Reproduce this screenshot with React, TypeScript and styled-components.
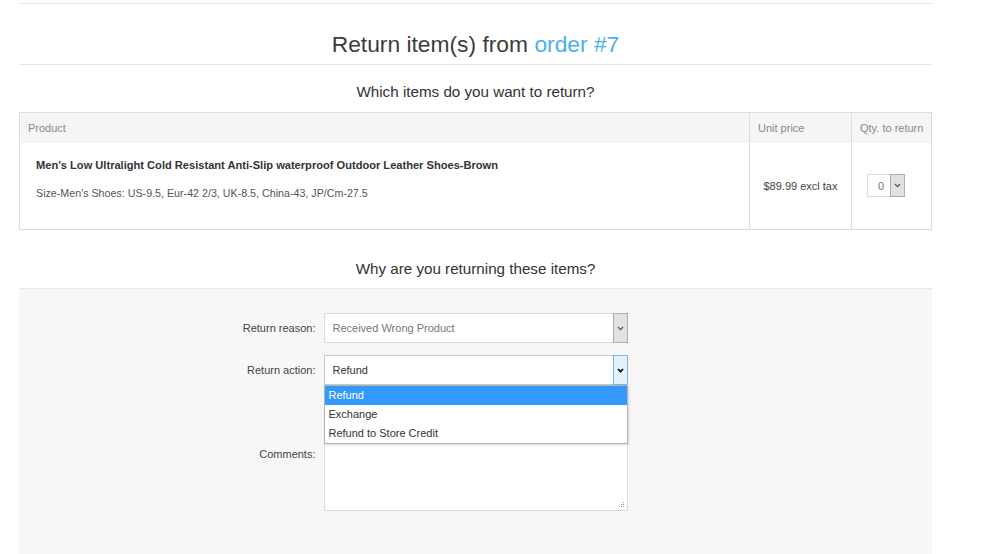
import React from 'react';
import styled, { createGlobalStyle } from 'styled-components';

const GlobalStyle = createGlobalStyle`
  body {
    margin: 0;
    background: #fff;
    font-family: 'Liberation Sans', Arial, sans-serif;
    color: #444;
  }
`;

const Page = styled.div`
  width: 913px;
  margin-left: 19px;
  padding-top: 3px;
`;

const Title = styled.h1`
  margin: 0;
  padding: 27px 0 7px;
  border-top: 1px solid #e5e5e5;
  border-bottom: 1px solid #e5e5e5;
  font-size: 22.8px;
  line-height: 26px;
  font-weight: normal;
  color: #3c3c3c;
  text-align: center;

  a {
    color: #4ab0ee;
    text-decoration: none;
  }
`;

const SubTitle = styled.h2<{ $top: number; $bottom: number }>`
  margin: ${(p) => p.$top}px 0 ${(p) => p.$bottom}px;
  font-size: 15.2px;
  line-height: 20px;
  font-weight: normal;
  color: #333;
  text-align: center;
`;

const Table = styled.table`
  width: 100%;
  border-collapse: collapse;
  border: 1px solid #ddd;
  font-size: 11px;
  table-layout: fixed;
`;

const Th = styled.th<{ $width?: number }>`
  height: 30px;
  padding: 0 8px;
  background: #f5f5f5;
  color: #888;
  font-weight: normal;
  white-space: nowrap;
  text-align: left;
  border-left: 1px solid #ddd;
  width: ${(p) => (p.$width ? `${p.$width}px` : 'auto')};
  box-sizing: border-box;
`;

const Td = styled.td<{ $align?: 'left' | 'center'; $top?: boolean; $pad: number }>`
  height: 87px;
  box-sizing: border-box;
  padding: ${(p) => (p.$top ? '16px' : '0')} 0 0 ${(p) => p.$pad}px;
  border-left: 1px solid #ddd;
  text-align: ${(p) => p.$align ?? 'left'};
  white-space: nowrap;
  color: #444;
  vertical-align: ${(p) => (p.$top ? 'top' : 'middle')};
`;

const ProductName = styled.div`
  font-weight: bold;
  font-size: 11.1px;
  color: #333;
  line-height: 13px;
  margin-bottom: 15px;
`;

const Attributes = styled.div`
  color: #555;
  font-size: 10.7px;
  line-height: 13px;
`;

const SelectBox = styled.div<{ $focused?: boolean; $width: number; $height: number; $muted?: boolean }>`
  position: relative;
  display: inline-flex;
  align-items: stretch;
  box-sizing: border-box;
  width: ${(p) => p.$width}px;
  height: ${(p) => p.$height}px;
  background: #fff;
  border: 1px solid ${(p) => (p.$focused ? '#c8c8c8' : '#ddd')};
  font-size: 11px;
  color: ${(p) => (p.$muted ? '#777' : '#333')};
  text-align: left;
  vertical-align: middle;
`;

const SelectValue = styled.span<{ $pad: number }>`
  flex: 1;
  display: flex;
  align-items: center;
  padding-left: ${(p) => p.$pad}px;
`;

const ArrowButton = styled.span<{ $focused?: boolean }>`
  display: flex;
  align-items: center;
  justify-content: center;
  width: 13px;
  margin: -1px -1px -1px 0;
  background: ${(p) => (p.$focused ? '#e5f1fb' : '#e1e1e1')};
  border: 1px solid ${(p) => (p.$focused ? '#7eb4ea' : '#adadad')};
  color: ${(p) => (p.$focused ? '#111' : '#555')};
`;

const Chevron = ({ dark }: { dark?: boolean }) => (
  <svg width="7" height="5" viewBox="0 0 7 5">
    <path d="M1 1 L3.5 3.6 L6 1" fill="none" stroke="currentColor" strokeWidth={dark ? 1.8 : 1.3} />
  </svg>
);

const Panel = styled.div`
  background: #f7f7f7;
  border-top: 1px solid #e8e8e8;
  padding: 24px 0 50px;
  display: grid;
  grid-template-columns: 1fr 304px 1fr;
  row-gap: 12px;
  align-items: center;
`;

const Label = styled.label`
  grid-column: 1;
  justify-self: end;
  padding-right: 8px;
  font-size: 11px;
  color: #444;
`;

const Field = styled.div`
  grid-column: 2;
  position: relative;
`;

const Menu = styled.ul`
  position: absolute;
  top: 100%;
  left: 0;
  width: 304px;
  box-sizing: border-box;
  margin: 0;
  padding: 0;
  list-style: none;
  background: #fff;
  border: 1px solid #b4b4b4;
  box-shadow: 1px 1px 2px rgba(0, 0, 0, 0.15);
  z-index: 2;
`;

const MenuItem = styled.li<{ $active?: boolean }>`
  height: 19px;
  line-height: 19px;
  padding-left: 4px;
  font-size: 11px;
  background: ${(p) => (p.$active ? '#3399ff' : '#fff')};
  color: ${(p) => (p.$active ? '#fff' : '#333')};
`;

const TextBox = styled.div`
  position: relative;
  box-sizing: border-box;
  height: 114px;
  background: #fff;
  border: 1px solid #ddd;
`;

const Grip = styled.svg`
  position: absolute;
  right: 2px;
  bottom: 2px;
`;

const App = () => {
  return (
    <>
      <GlobalStyle />
      <Page>
        <Title>
          Return item(s) from <a href="#order">order #7</a>
        </Title>
        <SubTitle $top={17} $bottom={10}>Which items do you want to return?</SubTitle>
        <Table>
          <thead>
            <tr>
              <Th>Product</Th>
              <Th $width={102}>Unit price</Th>
              <Th $width={80}>Qty. to return</Th>
            </tr>
          </thead>
          <tbody>
            <tr>
              <Td $top $pad={16}>
                <ProductName>Men's Low Ultralight Cold Resistant Anti-Slip waterproof Outdoor Leather Shoes-Brown</ProductName>
                <Attributes>Size-Men's Shoes: US-9.5, Eur-42 2/3, UK-8.5, China-43, JP/Cm-27.5</Attributes>
              </Td>
              <Td $align="center" $pad={0}>$89.99 excl tax</Td>
              <Td $pad={15}>
                <SelectBox $width={38} $height={23} $muted>
                  <SelectValue $pad={10}>0</SelectValue>
                  <ArrowButton>
                    <Chevron />
                  </ArrowButton>
                </SelectBox>
              </Td>
            </tr>
          </tbody>
        </Table>
        <SubTitle $top={29} $bottom={9}>Why are you returning these items?</SubTitle>
        <Panel>
          <Label>Return reason:</Label>
          <Field>
            <SelectBox $width={304} $height={30} $muted>
              <SelectValue $pad={8}>Received Wrong Product</SelectValue>
              <ArrowButton>
                <Chevron />
              </ArrowButton>
            </SelectBox>
          </Field>
          <Label>Return action:</Label>
          <Field>
            <SelectBox $width={304} $height={30} $focused>
              <SelectValue $pad={8}>Refund</SelectValue>
              <ArrowButton $focused>
                <Chevron dark />
              </ArrowButton>
            </SelectBox>
            <Menu>
              <MenuItem $active>Refund</MenuItem>
              <MenuItem>Exchange</MenuItem>
              <MenuItem>Refund to Store Credit</MenuItem>
            </Menu>
          </Field>
          <Label>Comments:</Label>
          <Field>
            <TextBox>
              <Grip width="7" height="7" viewBox="0 0 7 7">
                <rect x="5" y="1" width="1" height="1" fill="#999" />
                <rect x="3" y="3" width="1" height="1" fill="#999" />
                <rect x="5" y="3" width="1" height="1" fill="#999" />
                <rect x="1" y="5" width="1" height="1" fill="#999" />
                <rect x="3" y="5" width="1" height="1" fill="#999" />
                <rect x="5" y="5" width="1" height="1" fill="#999" />
              </Grip>
            </TextBox>
          </Field>
        </Panel>
      </Page>
    </>
  );
};

export default App;
